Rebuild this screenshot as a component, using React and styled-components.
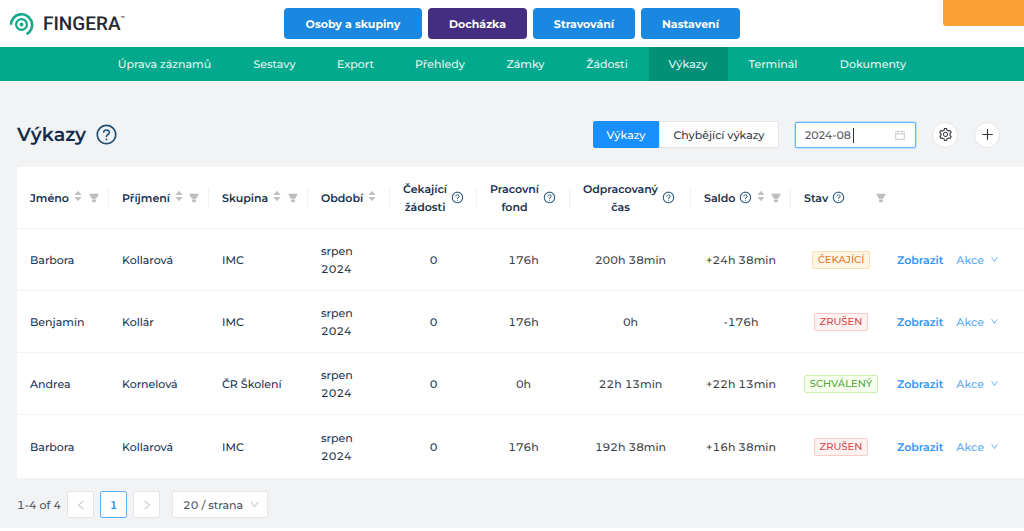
import React from "react";
import styled, { createGlobalStyle, css } from "styled-components";
import {
  AiFillCaretDown,
  AiFillCaretUp,
  AiFillFilter,
  AiOutlineCalendar,
  AiOutlineDown,
  AiOutlineLeft,
  AiOutlinePlus,
  AiOutlineQuestionCircle,
  AiOutlineRight,
  AiOutlineSetting,
} from "react-icons/ai";

const GlobalStyle = createGlobalStyle`
  * {
    box-sizing: border-box;
  }

  body {
    margin: 0;
    background: #fff;
    color: #1b3453;
    font-family: Montserrat, Inter, sans-serif;
    font-size: 11px;
    font-variant-numeric: tabular-nums;
    line-height: 18px;
    text-rendering: geometricPrecision;
  }

  button, input, select {
    font: inherit;
    font-variant-numeric: inherit;
    text-rendering: inherit;
  }

  svg {
    display: block;
  }
`;

const TopBar = styled.header`
  display: grid;
  grid-template-columns: 1fr auto 1fr;
  align-items: center;
  height: 47px;
`;

const Logo = styled.a`
  display: flex;
  align-items: center;
  gap: 8px;
  padding-left: 9px;
  color: #25272e;
  text-decoration: none;
`;

const LogoText = styled.span`
  display: flex;
  font-family: Roboto, sans-serif;
  font-size: 19px;
  font-weight: 500;
  line-height: 24px;

  small {
    font-size: 7px;
    line-height: 14px;
  }
`;

const Modules = styled.nav`
  display: flex;
  gap: 6px;
`;

const ModuleButton = styled.button`
  width: ${({ $width }) => $width}px;
  height: 31px;
  padding: 0;
  border: 0;
  border-radius: 4px;
  background: ${({ $active }) => ($active ? "#432e82" : "#1a87e0")};
  color: #fff;
  font-weight: 700;
`;

const Banner = styled.div`
  justify-self: end;
  align-self: start;
  width: 81px;
  height: 26px;
  border-bottom-left-radius: 3px;
  background: #fea134;
`;

const SubNav = styled.nav`
  display: flex;
  justify-content: center;
  height: 34px;
  background: #02a98c;
`;

const SubNavLink = styled.a`
  display: flex;
  align-items: center;
  justify-content: center;
  width: ${({ $width }) => $width}px;
  background: ${({ $active }) => ($active ? "#029077" : "transparent")};
  color: #e4f7f3;
  font-weight: 500;
  text-decoration: none;
`;

const Page = styled.main`
  padding: 40px 0 10px 17px;
  background: #f1f3f5;
`;

const PageHead = styled.div`
  display: flex;
  align-items: center;
  height: 27px;
  margin-bottom: 19px;
  padding-right: 24px;
`;

const Title = styled.h1`
  margin: 0 9px 0 0;
  color: #122b4c;
  font-size: 19px;
  font-weight: 600;
  line-height: 26px;
`;

const HelpIcon = styled(AiOutlineQuestionCircle)`
  flex: none;
  color: #1d4f76;
`;

const Tools = styled.div`
  display: flex;
  align-items: center;
  gap: 16px;
  margin-left: auto;
`;

const Switcher = styled.div`
  display: flex;
`;

const SwitchButton = styled.button`
  width: ${({ $width }) => $width}px;
  height: 27px;
  padding: 0;
  border: 1px solid ${({ $active }) => ($active ? "#1990ff" : "#e3e5e8")};
  border-radius: ${({ $active }) => ($active ? "2px 0 0 2px" : "0 2px 2px 0")};
  background: ${({ $active }) => ($active ? "#1990ff" : "#fff")};
  color: ${({ $active }) => ($active ? "#fff" : "#333a42")};
  font-weight: 500;
`;

const DateField = styled.label`
  position: relative;
  display: flex;
  align-items: center;
  width: 121px;
  height: 26px;
  padding: 0 9px;
  border: 1px solid #66b4fb;
  border-radius: 2px;
  background: #fff;
  box-shadow: 0 0 0 1px #c4e1fa;
  color: #c4c6c9;
`;

const DateInput = styled.input`
  flex: 1;
  min-width: 0;
  padding: 0;
  border: 0;
  outline: 0;
  background: none;
  color: #555a60;
  font-weight: 500;
  font-variant-numeric: normal;
`;

const Caret = styled.span`
  position: absolute;
  top: 5px;
  left: 57px;
  width: 1px;
  height: 15px;
  background: #333;
`;

const RoundButton = styled.button`
  display: flex;
  align-items: center;
  justify-content: center;
  width: 26px;
  height: 26px;
  padding: 0;
  border: 1px solid #e3e5e8;
  border-radius: 50%;
  background: #fff;
  color: #33373c;
`;

const Table = styled.table`
  width: 100%;
  border-collapse: separate;
  border-spacing: 0;
  border-radius: 3px 0 0 0;
  background: #fff;
  table-layout: fixed;
`;

const HeadCell = styled.th`
  height: 62px;
  padding: 0;
  border-bottom: 1px solid #f2f3f5;
  text-align: left;
`;

const HeadContent = styled.div`
  display: flex;
  align-items: center;
  gap: 4px;
  height: 20px;
  padding: 0 ${({ $end }) => $end}px 0 13px;
  border-right: ${({ $divider }) => ($divider ? "1px solid #eef0f2" : "0")};
  color: #163050;
  font-weight: 600;
`;

const HeadLabel = styled.span`
  ${({ $wrap }) =>
    $wrap &&
    css`
      text-align: center;
      white-space: pre-line;
    `}
`;

const SortButton = styled.button`
  display: flex;
  flex-direction: column;
  padding: 0 0 3px;
  border: 0;
  background: none;
  color: #bfc0c4;

  svg + svg {
    margin-top: -4px;
  }
`;

const FilterButton = styled.button`
  margin-left: auto;
  padding: 0;
  border: 0;
  background: none;
  color: #bfbdbc;
`;

const Cell = styled.td`
  height: ${({ $last }) => ($last ? 63 : 62)}px;
  padding: ${({ $center }) => ($center ? "0" : "0 13px")};
  border-bottom: ${({ $last }) => ($last ? "0" : "1px solid #f2f3f5")};
  color: ${({ $muted }) => ($muted ? "#3c4148" : "#1b3453")};
  font-weight: 500;
  text-align: ${({ $center }) => ($center ? "center" : "left")};
  white-space: pre-line;
`;

const tones = {
  waiting: ["#e0792f", "#fff5e4", "#fbdcb0"],
  cancelled: ["#d64a4a", "#fff2f0", "#fbcbc7"],
  approved: ["#56a63a", "#f6ffed", "#cdefae"],
};

const Tag = styled.span`
  display: inline-block;
  padding: 0 5px;
  border: 1px solid ${({ $tone }) => tones[$tone][2]};
  border-radius: 2px;
  background: ${({ $tone }) => tones[$tone][1]};
  color: ${({ $tone }) => tones[$tone][0]};
  font-size: 10px;
  line-height: 16px;
`;

const Actions = styled.div`
  display: flex;
  align-items: center;
  gap: 13px;
  margin-left: -7px;
`;

const ActionLink = styled.a`
  color: #2f95f7;
  font-weight: 600;
  text-decoration: none;
`;

const ActionMenu = styled.button`
  display: flex;
  align-items: center;
  gap: 6px;
  padding: 0;
  border: 0;
  background: none;
  color: #58a9f5;
`;

const Pagination = styled.nav`
  display: flex;
  align-items: center;
  gap: 6px;
  margin-top: 13px;
  color: #4d5258;
  font-weight: 500;
`;

const PageButton = styled.button`
  display: flex;
  align-items: center;
  justify-content: center;
  width: 27px;
  height: 27px;
  padding: 0;
  border: 1px solid ${({ $active }) => ($active ? "#5eb0fa" : "#e3e5e8")};
  border-radius: 2px;
  background: #fff;
  color: ${({ $active }) => ($active ? "#2f95f7" : "#c0c2c5")};
  font-weight: 600;
`;

const PageSize = styled.label`
  position: relative;
  margin-left: 6px;
  color: #c0c2c5;

  svg {
    position: absolute;
    top: 8px;
    right: 8px;
  }
`;

const PageSizeSelect = styled.select`
  display: block;
  width: 96px;
  height: 27px;
  padding: 0 0 0 10px;
  border: 1px solid #e3e5e8;
  border-radius: 2px;
  background: #fff;
  color: #4d5258;
  appearance: none;
`;

const modules = [
  { label: "Osoby a skupiny", width: 138 },
  { label: "Docházka", width: 99, active: true },
  { label: "Stravování", width: 102 },
  { label: "Nastavení", width: 99 },
];

const sections = [
  { label: "Úprava záznamů", width: 136 },
  { label: "Sestavy", width: 84 },
  { label: "Export", width: 78 },
  { label: "Přehledy", width: 91 },
  { label: "Zámky", width: 80 },
  { label: "Žádosti", width: 83 },
  { label: "Výkazy", width: 79, active: true },
  { label: "Terminál", width: 91 },
  { label: "Dokumenty", width: 109 },
];

const columns = [
  { label: "Jméno", width: 92, sort: true, filter: true },
  { label: "Příjmení", width: 100, sort: true, filter: true },
  { label: "Skupina", width: 99, sort: true, filter: true },
  { label: "Období", width: 82, sort: true },
  { label: "Čekající\nžádosti", width: 87, help: true, wrap: true },
  { label: "Pracovní\nfond", width: 93, help: true, wrap: true },
  { label: "Odpracovaný\nčas", width: 121, help: true, wrap: true },
  { label: "Saldo", width: 100, help: true, sort: true, filter: true },
  { label: "Stav", width: 100, help: true, filter: true, end: 4 },
];

const rows = [
  ["Barbora", "Kollarová", "IMC", "0", "176h", "200h 38min", "+24h 38min", "ČEKAJÍCÍ", "waiting"],
  ["Benjamin", "Kollár", "IMC", "0", "176h", "0h", "-176h", "ZRUŠEN", "cancelled"],
  ["Andrea", "Kornelová", "ČR Školení", "0", "0h", "22h 13min", "+22h 13min", "SCHVÁLENÝ", "approved"],
  ["Barbora", "Kollarová", "IMC", "0", "176h", "192h 38min", "+16h 38min", "ZRUŠEN", "cancelled"],
];

const LogoMark = () => (
  <svg width="26" height="24" viewBox="0 0 26 24" fill="none" stroke="#12a88c">
    <path d="M2 12.8A10.6 10.6 0 1 1 17.6 22.2" strokeWidth="2.6" />
    <circle cx="12.5" cy="12.5" r="5.4" strokeWidth="2.2" />
    <circle cx="12.5" cy="12.5" r="1.9" fill="#12a88c" stroke="none" />
  </svg>
);

const ColumnHead = ({ column, last }) => (
  <HeadCell scope="col">
    <HeadContent $end={column.end || (column.filter ? 8 : 0)} $divider={!last}>
      <HeadLabel $wrap={column.wrap}>{column.label}</HeadLabel>
      {column.help && <HelpIcon size={13} />}
      {column.sort && (
        <SortButton aria-label={`Seřadit: ${column.label}`}>
          <AiFillCaretUp size={10} />
          <AiFillCaretDown size={10} />
        </SortButton>
      )}
      {column.filter && (
        <FilterButton aria-label={`Filtrovat: ${column.label}`}>
          <AiFillFilter size={12} />
        </FilterButton>
      )}
    </HeadContent>
  </HeadCell>
);

const ReportRow = ({ row, last }) => {
  const [name, surname, group, requests, fund, worked, balance, status, tone] = row;

  return (
    <tr>
      <Cell $last={last}>{name}</Cell>
      <Cell $last={last}>{surname}</Cell>
      <Cell $last={last}>{group}</Cell>
      <Cell $last={last}>{"srpen\n2024"}</Cell>
      <Cell $last={last} $center>{requests}</Cell>
      <Cell $last={last} $center $muted>{fund}</Cell>
      <Cell $last={last} $center $muted>{worked}</Cell>
      <Cell $last={last} $center $muted>{balance}</Cell>
      <Cell $last={last} $center>
        <Tag $tone={tone}>{status}</Tag>
      </Cell>
      <Cell $last={last}>
        <Actions>
          <ActionLink href="#zobrazit">Zobrazit</ActionLink>
          <ActionMenu>
            Akce
            <AiOutlineDown size={9} />
          </ActionMenu>
        </Actions>
      </Cell>
    </tr>
  );
};

const App = () => {
  return (
    <>
      <GlobalStyle />
      <TopBar>
        <Logo href="#domu">
          <LogoMark />
          <LogoText>
            FINGERA<small>™</small>
          </LogoText>
        </Logo>
        <Modules>
          {modules.map(({ label, width, active }) => (
            <ModuleButton key={label} $width={width} $active={active}>
              {label}
            </ModuleButton>
          ))}
        </Modules>
        <Banner />
      </TopBar>
      <SubNav>
        {sections.map(({ label, width, active }) => (
          <SubNavLink key={label} href="#sekce" $width={width} $active={active}>
            {label}
          </SubNavLink>
        ))}
      </SubNav>
      <Page>
        <PageHead>
          <Title>Výkazy</Title>
          <HelpIcon size={23} />
          <Tools>
            <Switcher>
              <SwitchButton $width={66} $active>Výkazy</SwitchButton>
              <SwitchButton $width={120}>Chybějící výkazy</SwitchButton>
            </Switcher>
            <DateField>
              <DateInput aria-label="Období" defaultValue="2024-08" />
              <Caret />
              <AiOutlineCalendar size={12} />
            </DateField>
            <RoundButton aria-label="Nastavení tabulky">
              <AiOutlineSetting size={15} />
            </RoundButton>
            <RoundButton aria-label="Přidat">
              <AiOutlinePlus size={15} />
            </RoundButton>
          </Tools>
        </PageHead>
        <Table>
          <colgroup>
            {columns.map(({ label, width }) => (
              <col key={label} width={width} />
            ))}
            <col />
          </colgroup>
          <thead>
            <tr>
              {columns.map((column, index) => (
                <ColumnHead
                  key={column.label}
                  column={column}
                  last={index === columns.length - 1}
                />
              ))}
              <HeadCell as="td" />
            </tr>
          </thead>
          <tbody>
            {rows.map((row, index) => (
              <ReportRow key={index} row={row} last={index === rows.length - 1} />
            ))}
          </tbody>
        </Table>
        <Pagination>
          <span>1-4 of 4</span>
          <PageButton aria-label="Předchozí">
            <AiOutlineLeft size={12} />
          </PageButton>
          <PageButton $active>1</PageButton>
          <PageButton aria-label="Další">
            <AiOutlineRight size={12} />
          </PageButton>
          <PageSize>
            <PageSizeSelect aria-label="Počet na stránku">
              <option>20 / strana</option>
            </PageSizeSelect>
            <AiOutlineDown size={11} />
          </PageSize>
        </Pagination>
      </Page>
    </>
  );
};

export default App;
